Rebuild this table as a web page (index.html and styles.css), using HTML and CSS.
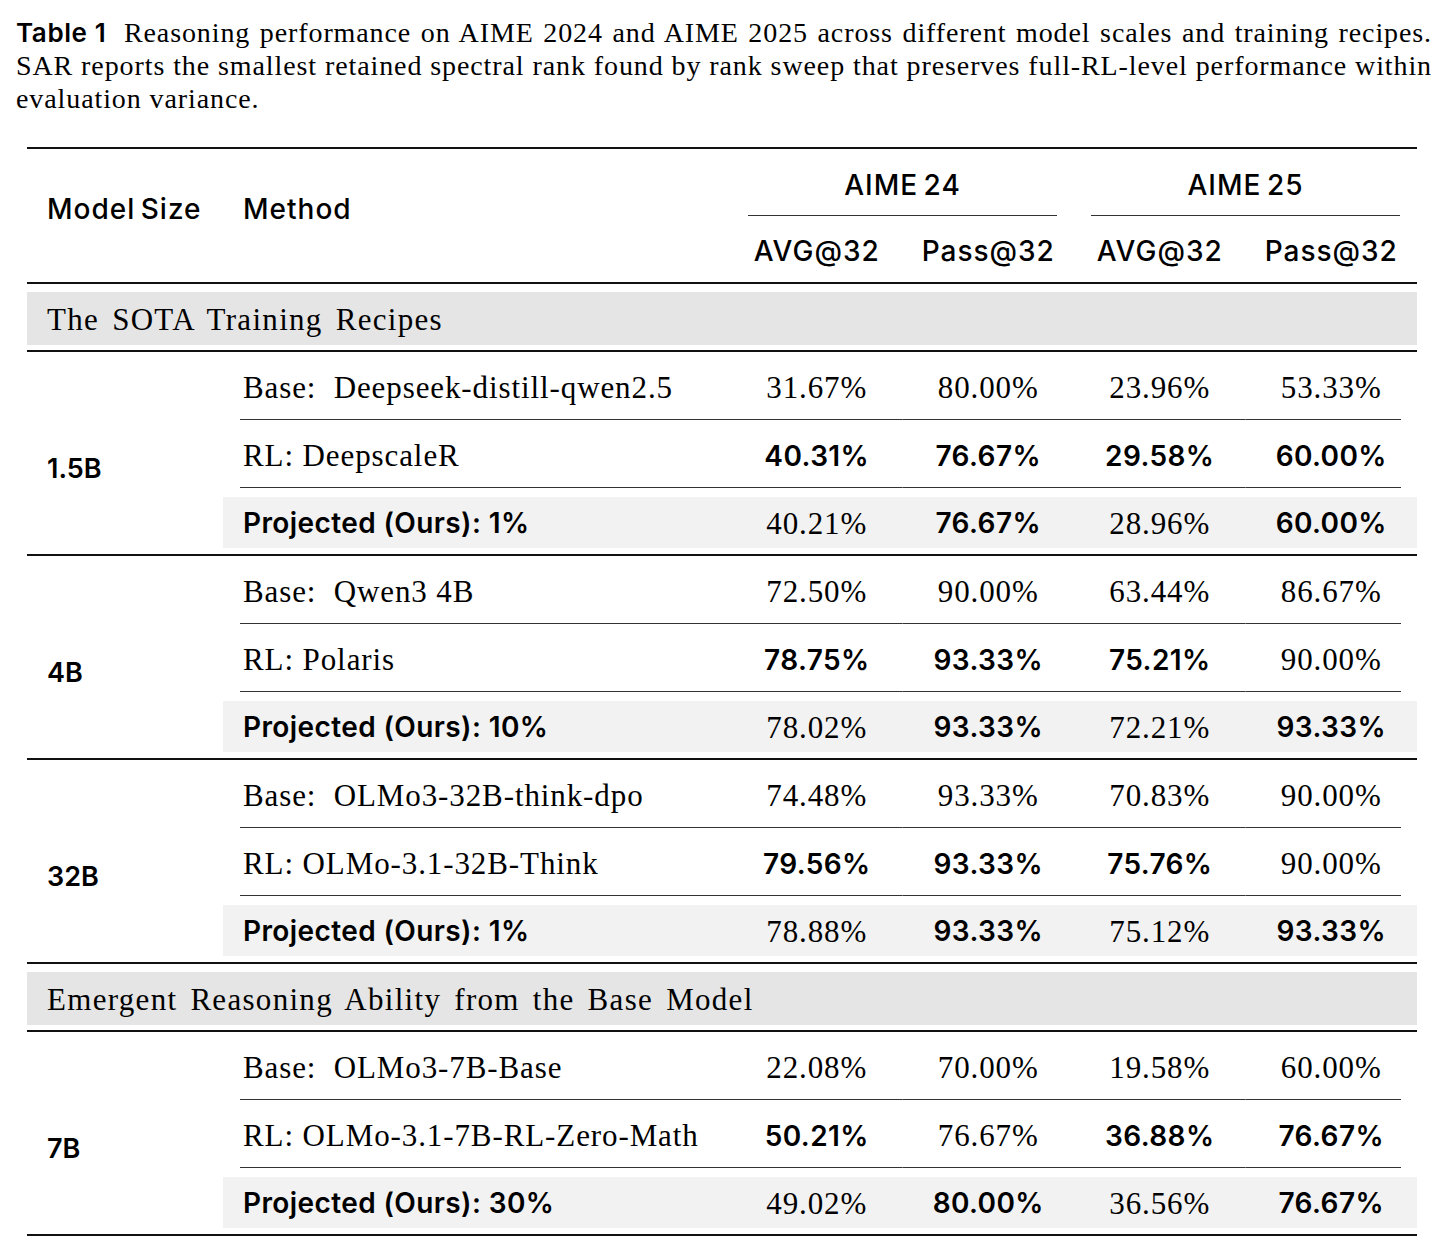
FILE: index.html
```html
<!DOCTYPE html>
<html lang="en">
	<head>
		<meta charset="UTF-8" />
		<meta name="viewport" content="width=device-width, initial-scale=1.0" />
		<title>Table 1 - Reasoning performance on AIME</title>
		<link rel="stylesheet" href="styles.css">
	</head>
	<body>
		<div class="caption">
			<p class="line"><span class="label">Table 1</span> Reasoning performance on AIME 2024 and AIME 2025 across different model scales and training recipes.</p>
			<p class="line">SAR reports the smallest retained spectral rank found by rank sweep that preserves full-RL-level performance within</p>
			<p class="line last">evaluation variance.</p>
		</div>

		<table class="results">
			<thead>
				<tr class="head-top">
					<th rowspan="2" class="col-size">Model Size</th>
					<th rowspan="2" class="col-method">Method</th>
					<th colspan="2" class="group"><div>AIME 24</div></th>
					<th colspan="2" class="group last-group"><div>AIME 25</div></th>
				</tr>
				<tr class="head-sub">
					<th>AVG@32</th>
					<th>Pass@32</th>
					<th>AVG@32</th>
					<th>Pass@32</th>
				</tr>
			</thead>

			<tbody>
				<tr class="section">
					<td colspan="6"><div class="band">The SOTA Training Recipes</div></td>
				</tr>
			</tbody>

			<tbody class="block">
				<tr class="row-base">
					<td rowspan="3" class="size">1.5B</td>
					<td class="method">Base:&nbsp; Deepseek-distill-qwen2.5</td>
					<td>31.67%</td>
					<td>80.00%</td>
					<td>23.96%</td>
					<td>53.33%</td>
				</tr>
				<tr class="row-rl">
					<td class="method">RL: DeepscaleR</td>
					<td class="b">40.31%</td>
					<td class="b">76.67%</td>
					<td class="b">29.58%</td>
					<td class="b">60.00%</td>
				</tr>
				<tr class="row-proj">
					<td class="method"><div class="shade b">Projected (Ours): 1%</div></td>
					<td><div class="shade">40.21%</div></td>
					<td><div class="shade b">76.67%</div></td>
					<td><div class="shade">28.96%</div></td>
					<td><div class="shade b">60.00%</div></td>
				</tr>
			</tbody>

			<tbody class="block">
				<tr class="row-base">
					<td rowspan="3" class="size">4B</td>
					<td class="method">Base:&nbsp; Qwen3 4B</td>
					<td>72.50%</td>
					<td>90.00%</td>
					<td>63.44%</td>
					<td>86.67%</td>
				</tr>
				<tr class="row-rl">
					<td class="method">RL: Polaris</td>
					<td class="b">78.75%</td>
					<td class="b">93.33%</td>
					<td class="b">75.21%</td>
					<td>90.00%</td>
				</tr>
				<tr class="row-proj">
					<td class="method"><div class="shade b">Projected (Ours): 10%</div></td>
					<td><div class="shade">78.02%</div></td>
					<td><div class="shade b">93.33%</div></td>
					<td><div class="shade">72.21%</div></td>
					<td><div class="shade b">93.33%</div></td>
				</tr>
			</tbody>

			<tbody class="block">
				<tr class="row-base">
					<td rowspan="3" class="size">32B</td>
					<td class="method">Base:&nbsp; OLMo3-32B-think-dpo</td>
					<td>74.48%</td>
					<td>93.33%</td>
					<td>70.83%</td>
					<td>90.00%</td>
				</tr>
				<tr class="row-rl">
					<td class="method">RL: OLMo-3.1-32B-Think</td>
					<td class="b">79.56%</td>
					<td class="b">93.33%</td>
					<td class="b">75.76%</td>
					<td>90.00%</td>
				</tr>
				<tr class="row-proj">
					<td class="method"><div class="shade b">Projected (Ours): 1%</div></td>
					<td><div class="shade">78.88%</div></td>
					<td><div class="shade b">93.33%</div></td>
					<td><div class="shade">75.12%</div></td>
					<td><div class="shade b">93.33%</div></td>
				</tr>
			</tbody>

			<tbody>
				<tr class="section">
					<td colspan="6"><div class="band">Emergent Reasoning Ability from the Base Model</div></td>
				</tr>
			</tbody>

			<tbody class="block">
				<tr class="row-base">
					<td rowspan="3" class="size">7B</td>
					<td class="method">Base:&nbsp; OLMo3-7B-Base</td>
					<td>22.08%</td>
					<td>70.00%</td>
					<td>19.58%</td>
					<td>60.00%</td>
				</tr>
				<tr class="row-rl">
					<td class="method">RL: OLMo-3.1-7B-RL-Zero-Math</td>
					<td class="b">50.21%</td>
					<td>76.67%</td>
					<td class="b">36.88%</td>
					<td class="b">76.67%</td>
				</tr>
				<tr class="row-proj">
					<td class="method"><div class="shade b">Projected (Ours): 30%</div></td>
					<td><div class="shade">49.02%</div></td>
					<td><div class="shade b">80.00%</div></td>
					<td><div class="shade">36.56%</div></td>
					<td><div class="shade b">76.67%</div></td>
				</tr>
			</tbody>
		</table>
	</body>
</html>
```

FILE: styles.css
```css
body {
	margin: 0;
	padding: 16px 16px 0;
	background: #fff;
	color: #000;
	font-family: "Liberation Serif", serif;
}
.caption {
	width: 1416px;
	font-size: 28px;
	letter-spacing: 0.9px;
}
.caption .line {
	margin: 0;
	line-height: 33px;
	text-align: justify;
	text-align-last: justify;
}
.caption .line.last {
	text-align-last: left;
}
.caption .label {
	display: inline-block;
	font-family: Inter, sans-serif;
	font-weight: 600;
	font-size: 26px;
	letter-spacing: 0.6px;
	margin-right: 8px;
}
.results {
	margin: 32px 0 0 11px;
	width: 1390px;
	border-collapse: separate;
	border-spacing: 0;
	border-top: 2px solid #111;
	table-layout: fixed;
	font-size: 31px;
	letter-spacing: 0.9px;
	word-spacing: 0;
}
.results th {
	font-family: Inter, sans-serif;
	font-weight: 500;
	font-size: 28px;
	letter-spacing: 1px;
	word-spacing: -3px;
	padding: 0;
}
.col-size {
	width: 176px;
	text-align: left;
	padding: 0 0 14px 20px !important;
	border-bottom: 2px solid #111;
}
.col-method {
	width: 488px;
	text-align: left;
	padding: 0 0 14px 20px !important;
	border-bottom: 2px solid #111;
}
.group {
	height: 67px;
	padding: 0 17px !important;
	vertical-align: bottom;
}
.group div {
	line-height: 32px;
	padding-bottom: 14px;
	border-bottom: 1px solid #333;
}
.head-sub th {
	height: 63px;
	line-height: 32px;
	padding-top: 3px;
	border-bottom: 2px solid #111;
}
.section td {
	padding: 8px 0 5px;
	border-bottom: 2px solid #111;
}
.band {
	background: #e5e5e5;
	height: 53px;
	line-height: 55px;
	padding-left: 20px;
	letter-spacing: 1.3px;
	word-spacing: 4px;
}
.block td {
	padding: 0;
	text-align: center;
	line-height: 32px;
}
.block .size {
	text-align: left;
	padding: 32px 0 0 20px;
	font-family: Inter, sans-serif;
	font-weight: 600;
	font-size: 27px;
	letter-spacing: 0;
	border-bottom: 2px solid #111;
}
.block .method {
	text-align: left;
	padding-left: 20px;
}
.row-base td,
.row-rl td {
	height: 64px;
	padding-top: 4px;
	background: linear-gradient(#333, #333) no-repeat center bottom / 100% 1px;
}
.row-base td.method,
.row-rl td.method {
	background-position: right bottom;
	background-size: calc(100% - 17px) 1px;
}
.row-base td:last-child,
.row-rl td:last-child {
	background-position: left bottom;
	background-size: calc(100% - 16px) 1px;
}
.row-base td.size {
	background: none;
	padding-top: 32px;
}
.row-proj td {
	padding: 9px 0 6px;
	border-bottom: 2px solid #111;
}
.row-proj td.method {
	padding-left: 0;
}
.shade {
	background: #f2f2f2;
	height: 51px;
	line-height: 53px;
}
.method .shade {
	padding-left: 20px;
}
.b {
	font-family: Inter, sans-serif;
	font-weight: 600;
	font-size: 28px;
	letter-spacing: 0.4px;
	word-spacing: 0;
}
```
